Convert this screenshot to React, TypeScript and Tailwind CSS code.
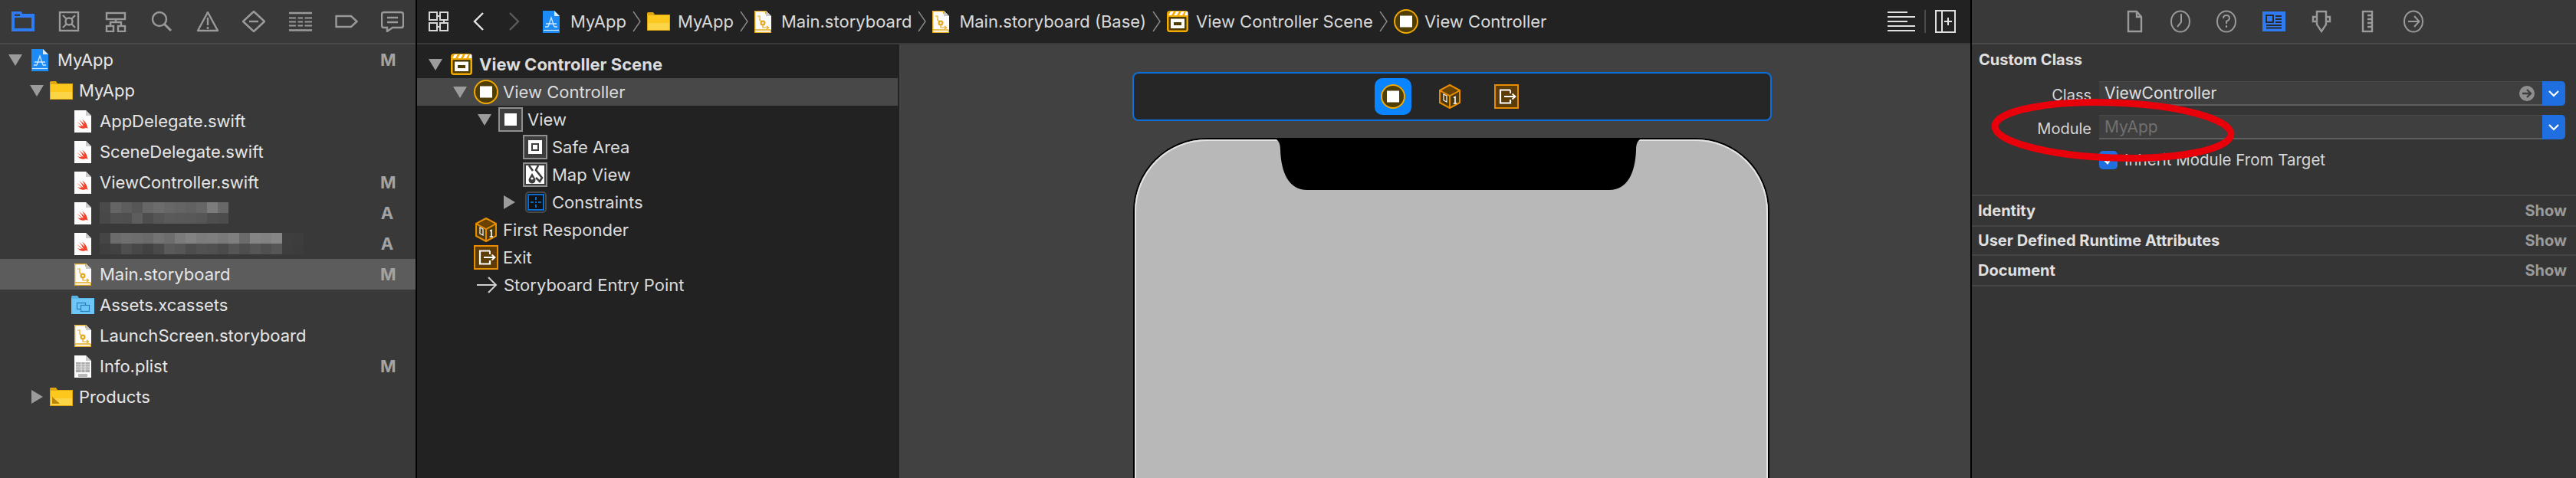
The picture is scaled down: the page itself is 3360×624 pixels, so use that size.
import type { ReactNode } from "react";

const rowOne = ["#4a4a4a", "#656565", "#5d5d5d", "#565656", "#666666", "#6c6c6c", "#676767", "#646464", "#616161", "#666666", "#7c7c7c", "#686868"];
const rowOneB = ["#484848", "#505050", "#4f4f4f", "#5d5d5d", "#4d4d4d", "#555555", "#5a5a5a", "#595959", "#585858", "#565656", "#4e4e4e", "#4c4c4c"];
const rowTwo = ["#454545", "#6b6b6b", "#6f6f6f", "#6d6d6d", "#6a6a6a", "#737373", "#6d6d6d", "#7b7b7b", "#828282", "#7c7c7c", "#7e7e7e", "#7a7a7a", "#7f7f7f", "#6b6b6b", "#858585", "#828282", "#868686", "#3e3e3e", "#3d3d3d"];
const rowTwoB = ["#3f3f3f", "#424242", "#4f4f4f", "#484848", "#424242", "#4a4a4a", "#5a5a5a", "#565656", "#4d4d4d", "#525252", "#505050", "#4b4b4b", "#555555", "#4e4e4e", "#565656", "#505050", "#565656", "#3e3e3e", "#3c3c3c"];

function Mosaic({ rows }: { rows: string[][] }) {
  return (
    <div className="flex flex-col">
      {rows.map((cells, r) => (
        <div key={r} className="flex">
          {cells.map((c, i) => (
            <div key={i} className="h-[14px] w-[14px]" style={{ backgroundColor: c }} />
          ))}
        </div>
      ))}
    </div>
  );
}

function TriDown({ className = "" }: { className?: string }) {
  return (
    <svg width="18" height="15" viewBox="0 0 18 15" className={`shrink-0 ${className}`}>
      <path d="M0 0H18L9 15Z" fill="#9b9b9b" />
    </svg>
  );
}

function TriRight({ className = "" }: { className?: string }) {
  return (
    <svg width="15" height="18" viewBox="0 0 15 18" className={`shrink-0 ${className}`}>
      <path d="M0 0V18L15 9Z" fill="#9b9b9b" />
    </svg>
  );
}

function ProjectIcon() {
  return (
    <svg width="22" height="29" viewBox="0 0 22 29" className="shrink-0">
      <path d="M0 0H15L22 7V29H0Z" fill="#1c8bf5" />
      <path d="M15 0L22 7H15Z" fill="#d9ecff" />
      <path d="M1 25.5H21" stroke="#d5ebff" strokeWidth="1.2" />
      <path d="M7 21L11 9L15 21M4 17H18M3 21H7M15 21H19" fill="none" stroke="#cfe7ff" strokeWidth="1.3" />
    </svg>
  );
}

function Folder({ products = false }: { products?: boolean }) {
  return (
    <svg width="30" height="24" viewBox="0 0 30 24" className="shrink-0">
      <path d="M0 1.5Q0 0 1.5 0H8L10 3H30V24H0Z" fill="#dfa70c" />
      <rect x="1" y="4" width="28" height="19" fill="#fcc81e" />
      <rect x="1" y="14" width="28" height="9" fill="#fbd545" />
      {products && <path d="M3 21V12L13 21Z" fill="#b98408" />}
    </svg>
  );
}

function AssetFolder() {
  return (
    <svg width="30" height="24" viewBox="0 0 30 24" className="shrink-0">
      <path d="M0 1.5Q0 0 1.5 0H8L10 3H30V24H0Z" fill="#57b4ea" />
      <rect x="0" y="4" width="30" height="20" fill="#6cc6f7" />
      <rect x="7.5" y="9.5" width="11" height="8" fill="none" stroke="#2e7fb8" strokeWidth="1.2" />
      <rect x="12.5" y="12.5" width="11" height="8" fill="#6cc6f7" stroke="#2e7fb8" strokeWidth="1.2" />
    </svg>
  );
}

function SwiftFile() {
  return (
    <svg width="22" height="29" viewBox="0 0 22 29" className="shrink-0">
      <path d="M0 0H15L22 7V29H0Z" fill="#fbfbfb" />
      <path d="M15 0L22 7H15Z" fill="#c9c9c9" />
      <path d="M4 15C7 18 10 20 12 21C10 17 8 14 6 12C9 14.5 12 17 13.5 18C12.5 15 11 13 10 11.5C13 13.5 16 16.5 16.5 20C17 21.5 17.3 23 18 24C16.5 22.8 15 23 13.5 23.5C10 24.5 6.5 23 4 20C6 21 8.5 21.2 9.5 20.5C8 19.5 5.5 17.5 4 15Z" fill="#f0442c" />
    </svg>
  );
}

function StoryboardFile({ small = false }: { small?: boolean }) {
  return (
    <svg width="22" height="29" viewBox="0 0 22 29" className="shrink-0">
      <path d="M0 0H15L22 7V29H0Z" fill="#fbfbfb" />
      <path d="M15 0L22 7H15Z" fill="#c9c9c9" />
      <path d="M.7.7H14.7V4M.7 .7V28.3H21.3V25M.7 25H21.3" fill="none" stroke="#e3aa1d" strokeWidth="1.3" />
      <path d="M4 7H7V12L9 14M11 19V22H18M16 20L18.5 22L16 24" fill="none" stroke="#e3aa1d" strokeWidth="1.2" />
      <circle cx="11" cy="16" r="3.5" fill="#e3aa1d" />
      <circle cx="11" cy="16" r="1.2" fill="#fbfbfb" />
      {small && <path d="M0 0" />}
    </svg>
  );
}

function PlistFile() {
  return (
    <svg width="22" height="29" viewBox="0 0 22 29" className="shrink-0">
      <path d="M0 0H15L22 7V29H0Z" fill="#fbfbfb" />
      <path d="M15 0L22 7H15Z" fill="#c9c9c9" />
      <rect x="2" y="9" width="18" height="13" fill="#a8a8a8" />
      <path d="M2 12H20M2 15H20M2 18H20M9 9V22M14 9V22" stroke="#ececec" strokeWidth="0.9" />
      <rect x="5" y="24" width="12" height="4" fill="#b8b8b8" />
    </svg>
  );
}

function SceneIcon() {
  return (
    <svg width="28" height="28" viewBox="0 0 28 28" className="shrink-0">
      <rect x="0" y="0" width="28" height="28" rx="4" fill="#f2a900" />
      <path d="M5 1H9L6 6H2ZM12 1H16L13 6H9ZM19 1H23L20 6H16ZM25 1H27V6H23Z" fill="#ffffff" />
      <rect x="2.5" y="8" width="23" height="17.5" rx="1" fill="#4f3c00" />
      <rect x="5" y="10.5" width="18" height="12.5" fill="#ffffff" />
      <rect x="9" y="15" width="10" height="4" fill="#4f3c00" />
    </svg>
  );
}

function VcIcon() {
  return (
    <svg width="32" height="32" viewBox="0 0 32 32" className="shrink-0">
      <circle cx="16" cy="16" r="15" fill="#4f3e05" stroke="#f2a900" strokeWidth="2" />
      <rect x="8" y="8.5" width="16" height="15" fill="#ffffff" />
    </svg>
  );
}

function ViewIcon() {
  return (
    <svg width="32" height="32" viewBox="0 0 32 32" className="shrink-0">
      <rect x="1" y="1" width="30" height="30" fill="#3d3d3d" stroke="#8f8f8f" strokeWidth="2" />
      <rect x="8" y="8" width="16" height="16" fill="#ffffff" />
    </svg>
  );
}

function SafeAreaIcon() {
  return (
    <svg width="32" height="32" viewBox="0 0 32 32" className="shrink-0">
      <rect x="1" y="1" width="30" height="30" fill="#3d3d3d" stroke="#8f8f8f" strokeWidth="2" />
      <rect x="7" y="7" width="18" height="18" fill="#ffffff" />
      <rect x="11" y="11" width="10" height="10" fill="#3d3d3d" />
      <rect x="13" y="13" width="6" height="6" fill="#ffffff" />
    </svg>
  );
}

function MapIcon() {
  return (
    <svg width="32" height="32" viewBox="0 0 32 32" className="shrink-0">
      <rect x="1" y="1" width="30" height="30" fill="#3d3d3d" stroke="#8f8f8f" strokeWidth="2" />
      <rect x="4" y="4" width="24" height="24" fill="#ffffff" />
      <path d="M8 4L13 11M20 4L17 10L25 20L22 25L17 20" fill="none" stroke="#3d3d3d" strokeWidth="2.6" />
      <path d="M12 14L16 21A4.5 4.5 0 1 1 8 21Z" fill="#3d3d3d" />
      <circle cx="12" cy="21" r="1.6" fill="#ffffff" />
    </svg>
  );
}

function ConstraintsIcon() {
  return (
    <svg width="28" height="28" viewBox="0 0 28 28" className="shrink-0">
      <rect x="1" y="1" width="26" height="26" rx="4" fill="#111111" stroke="#4a4a4a" strokeWidth="2" />
      <rect x="4" y="4" width="20" height="20" fill="none" stroke="#0a84ff" strokeWidth="1.6" />
      <path d="M14 7V11M14 13V15M14 17V21M7 14H11M17 14H21" stroke="#0a84ff" strokeWidth="1.6" />
    </svg>
  );
}

function CubeIcon({ size = 28 }: { size?: number }) {
  return (
    <svg width={size} height={32} viewBox="0 0 28 32" className="shrink-0">
      <path d="M14 1L27 8V24L14 31L1 24V8Z" fill="#4e3a10" stroke="#e88d00" strokeWidth="2" strokeLinejoin="round" />
      <path d="M1 8L14 15L27 8M14 15V31" fill="none" stroke="#e88d00" strokeWidth="2" />
      <path d="M14 3L24.5 8.5L14 14L3.5 8.5Z" fill="#6a4200" />
      <path d="M6 13L10 15V23L6 21Z" fill="none" stroke="#ffffff" strokeWidth="1.2" />
      <path d="M19 17.5L21 16.5V25M18.7 25H23" fill="none" stroke="#ffffff" strokeWidth="1.6" />
    </svg>
  );
}

function ExitIcon() {
  return (
    <svg width="32" height="32" viewBox="0 0 32 32" className="shrink-0">
      <rect x="1" y="1" width="30" height="30" fill="#5d3c08" stroke="#e88d00" strokeWidth="2" />
      <path d="M21 7.5H8V24.5H21V20" fill="none" stroke="#ffffff" strokeWidth="2.2" />
      <path d="M21 12V7.5M13 16H27M23.5 12.5L27.5 16L23.5 19.5" fill="none" stroke="#ffffff" strokeWidth="1.8" />
    </svg>
  );
}

function EntryArrow() {
  return (
    <svg width="28" height="24" viewBox="0 0 28 24" className="shrink-0">
      <path d="M1 12H26M16 2L26 12L16 22" fill="none" stroke="#cfcfcf" strokeWidth="2" />
    </svg>
  );
}

function Crumb() {
  return (
    <svg width="11" height="28" viewBox="0 0 11 28" className="mx-[8px] shrink-0">
      <path d="M1 1L10 14L1 27" fill="none" stroke="#8b8b8b" strokeWidth="1.4" />
    </svg>
  );
}

const navIcon = "shrink-0 text-[#9a9a9a]";

function NavBar() {
  return (
    <div className="flex h-14 items-center justify-between border-b-2 border-[#4a4a4a] box-content px-[15px]">
      <svg width="30" height="28" viewBox="0 0 30 28" className="shrink-0">
        <path d="M0 1H13L14 4H30V27H0Z" fill="#2f7bf3" />
        <rect x="4" y="9" width="22" height="14" fill="#3a3a3a" />
        <rect x="4" y="4.5" width="7" height="2.5" fill="#3a3a3a" />
      </svg>
      <svg width="30" height="28" viewBox="0 0 30 28" fill="none" stroke="currentColor" strokeWidth="2.4" className={navIcon}>
        <rect x="3" y="2" width="24" height="24" />
        <circle cx="15" cy="14" r="4.5" />
        <path d="M7 6L11.5 10.5M23 6L18.5 10.5M7 22L11.5 17.5M23 22L18.5 17.5" />
      </svg>
      <svg width="30" height="28" viewBox="0 0 30 28" fill="none" stroke="currentColor" strokeWidth="2.4" className={navIcon}>
        <rect x="3" y="3" width="24" height="8" />
        <path d="M15 11V15M8 20V15H22V20" />
        <rect x="3" y="20" width="9" height="7" />
        <rect x="18" y="20" width="9" height="7" />
      </svg>
      <svg width="30" height="28" viewBox="0 0 30 28" fill="none" stroke="currentColor" strokeWidth="2.4" className={navIcon}>
        <circle cx="12" cy="11" r="9" />
        <path d="M18.5 17.5L27 26" strokeWidth="3" />
      </svg>
      <svg width="30" height="28" viewBox="0 0 30 28" fill="none" stroke="currentColor" strokeWidth="2.4" className={navIcon}>
        <path d="M15 2L28 26H2Z" strokeLinejoin="round" />
        <path d="M15 9V19M15 21V24" />
      </svg>
      <svg width="30" height="28" viewBox="0 0 30 28" fill="none" stroke="currentColor" strokeWidth="2.4" className={navIcon}>
        <path d="M15 1L29 14L15 27L1 14Z" strokeLinejoin="round" />
        <path d="M9 14H21" />
      </svg>
      <svg width="30" height="28" viewBox="0 0 30 28" fill="none" stroke="currentColor" strokeWidth="2.4" className={navIcon}>
        <path d="M0 3H30M0 25.5H30" />
        <path d="M0 9.5H9M11.5 9.5H18M20.5 9.5H30M0 14.5H9M11.5 14.5H18M20.5 14.5H30M0 19.5H9M11.5 19.5H18M20.5 19.5H30" strokeWidth="2" />
      </svg>
      <svg width="30" height="28" viewBox="0 0 30 28" fill="none" stroke="currentColor" strokeWidth="2.4" className={navIcon}>
        <path d="M1.5 7H21L28.5 14L21 21H1.5Z" />
      </svg>
      <svg width="30" height="28" viewBox="0 0 30 28" fill="none" stroke="currentColor" strokeWidth="2.4" className={navIcon}>
        <path d="M4 2H26Q29 2 29 5V19Q29 22 26 22H15L8 27V22H4Q1 22 1 19V5Q1 2 4 2Z" />
        <path d="M8 9H22M8 15H22" />
      </svg>
    </div>
  );
}

function TreeRow({
  className,
  children,
  badge,
  selected = false,
}: {
  className: string;
  children: ReactNode;
  badge?: string;
  selected?: boolean;
}) {
  return (
    <div className={`flex h-10 items-center ${className} ${selected ? "bg-[#5c5c5c]" : ""}`}>
      {children}
      {badge && <span className="ml-auto w-[18px] text-center text-[22px] font-bold text-[#a3a3a3]">{badge}</span>}
    </div>
  );
}

function Navigator() {
  const file = "pl-[97px] pr-[28px] gap-[11px]";
  return (
    <aside className="w-[544px] shrink-0 border-r-2 border-black bg-[#393939] text-[#e6e6e6]">
      <NavBar />
      <div className="pt-0">
        <TreeRow className="pl-[11px] pr-[28px]" badge="M">
          <TriDown />
          <span className="ml-[12px]"><ProjectIcon /></span>
          <span className="ml-[12px]">MyApp</span>
        </TreeRow>
        <TreeRow className="pl-[39px] pr-[28px]">
          <TriDown />
          <span className="ml-[8px]"><Folder /></span>
          <span className="ml-[8px]">MyApp</span>
        </TreeRow>
        <TreeRow className={file}><SwiftFile /><span>AppDelegate.swift</span></TreeRow>
        <TreeRow className={file}><SwiftFile /><span>SceneDelegate.swift</span></TreeRow>
        <TreeRow className={file} badge="M"><SwiftFile /><span>ViewController.swift</span></TreeRow>
        <TreeRow className={file} badge="A"><SwiftFile /><Mosaic rows={[rowOne, rowOneB]} /></TreeRow>
        <TreeRow className={file} badge="A"><SwiftFile /><Mosaic rows={[rowTwo, rowTwoB]} /></TreeRow>
        <TreeRow className={file} badge="M" selected><StoryboardFile /><span>Main.storyboard</span></TreeRow>
        <TreeRow className="pl-[93px] pr-[28px] gap-[7px]"><AssetFolder /><span>Assets.xcassets</span></TreeRow>
        <TreeRow className={file}><StoryboardFile /><span>LaunchScreen.storyboard</span></TreeRow>
        <TreeRow className={file} badge="M"><PlistFile /><span>Info.plist</span></TreeRow>
        <TreeRow className="pl-[41px] pr-[28px]">
          <TriRight />
          <span className="ml-[9px]"><Folder products /></span>
          <span className="ml-[8px]">Products</span>
        </TreeRow>
      </div>
    </aside>
  );
}

function JumpBar() {
  return (
    <div className="box-content flex h-14 items-center border-b-2 border-[#3a3a3a] bg-[#222222] pl-[15px] pr-[19px] text-[#d9d9d9]">
      <svg width="26" height="26" viewBox="0 0 26 26" fill="none" stroke="#d8d8d8" strokeWidth="2" className="shrink-0">
        <rect x="1" y="1" width="10" height="10" />
        <rect x="15" y="1" width="10" height="10" />
        <rect x="1" y="15" width="10" height="10" />
        <rect x="15" y="15" width="10" height="10" />
        <path d="M11 6H15M20 11V15M11 20H15" />
      </svg>
      <svg width="14" height="24" viewBox="0 0 14 24" fill="none" stroke="#e6e6e6" strokeWidth="2.4" className="ml-[32px] shrink-0">
        <path d="M13 1L2 12L13 23" />
      </svg>
      <svg width="14" height="24" viewBox="0 0 14 24" fill="none" stroke="#5c5c5c" strokeWidth="2.4" className="ml-[33px] shrink-0">
        <path d="M1 1L12 12L1 23" />
      </svg>
      <span className="ml-[30px]"><ProjectIcon /></span>
      <span className="ml-[14px]">MyApp</span>
      <Crumb />
      <Folder />
      <span className="ml-[10px]">MyApp</span>
      <Crumb />
      <StoryboardFile />
      <span className="ml-[13px]">Main.storyboard</span>
      <Crumb />
      <StoryboardFile />
      <span className="ml-[13px]">Main.storyboard (Base)</span>
      <Crumb />
      <SceneIcon />
      <span className="ml-[10px]">View Controller Scene</span>
      <Crumb />
      <VcIcon />
      <span className="ml-[8px]">View Controller</span>
      <div className="ml-auto flex items-center">
        <svg width="36" height="28" viewBox="0 0 36 28" stroke="#e0e0e0" strokeWidth="2" className="shrink-0">
          <path d="M0 2H26M0 8H36M0 14H26M0 20H36M0 26H36" />
        </svg>
        <div className="mx-[12px] h-[30px] w-[2px] bg-[#4a4a4a]" />
        <svg width="27" height="30" viewBox="0 0 27 30" fill="none" stroke="#e0e0e0" strokeWidth="2" className="shrink-0">
          <rect x="1" y="1" width="25" height="28" />
          <path d="M9 1V29M12 15H22M17 10V20" />
        </svg>
      </div>
    </div>
  );
}

function OutlineRow({ className, children, selected = false }: { className: string; children: ReactNode; selected?: boolean }) {
  return <div className={`flex h-9 items-center ${className} ${selected ? "bg-[#484848]" : ""}`}>{children}</div>;
}

function Outline() {
  return (
    <div className="w-[631px] shrink-0 border-r-2 border-[#444444] bg-[#222222] pr-[2px] pt-[8px] text-[#dcdcdc]">
      <OutlineRow className="pl-[15px] gap-[11px]">
        <TriDown />
        <SceneIcon />
        <span className="ml-[-2px] font-bold">View Controller Scene</span>
      </OutlineRow>
      <OutlineRow className="pl-[47px] gap-[9px]" selected>
        <TriDown />
        <VcIcon />
        <span className="ml-[-3px]">View Controller</span>
      </OutlineRow>
      <OutlineRow className="pl-[79px] gap-[9px]">
        <TriDown />
        <ViewIcon />
        <span className="ml-[-3px]">View</span>
      </OutlineRow>
      <OutlineRow className="pl-[138px] gap-[6px]"><SafeAreaIcon /><span>Safe Area</span></OutlineRow>
      <OutlineRow className="pl-[138px] gap-[6px]"><MapIcon /><span>Map View</span></OutlineRow>
      <OutlineRow className="pl-[113px]">
        <TriRight />
        <span className="ml-[13px]"><ConstraintsIcon /></span>
        <span className="ml-[7px]">Constraints</span>
      </OutlineRow>
      <OutlineRow className="pl-[76px] gap-[8px]"><CubeIcon /><span>First Responder</span></OutlineRow>
      <OutlineRow className="pl-[74px] gap-[6px]"><ExitIcon /><span>Exit</span></OutlineRow>
      <OutlineRow className="pl-[77px] gap-[8px]"><EntryArrow /><span>Storyboard Entry Point</span></OutlineRow>
    </div>
  );
}

function Canvas() {
  return (
    <div className="min-w-0 flex-1 bg-[#414141] pl-[302px] pt-[36px]">
      <div className="flex h-16 w-[834px] items-center justify-center rounded-[8px] border-2 border-[#0b6fdc] bg-[#262626] pr-[14px]">
        <div className="flex h-12 w-12 items-center justify-center rounded-[10px] bg-[#0a84ff]"><VcIcon /></div>
        <span className="ml-[36px]"><CubeIcon /></span>
        <span className="ml-[44px]"><ExitIcon /></span>
      </div>
      <div className="relative mt-[22px] ml-px h-[460px] w-[830px] rounded-t-[96px] border-2 border-b-0 border-black bg-[#b8b8b8]">
        <div className="h-full w-full rounded-t-[94px] border-x-2 border-t-2 border-[#e4e4e4]" />
        <svg width="490" height="70" viewBox="0 0 490 70" className="absolute left-[177px] top-[-2px]">
          <path d="M0 0H490C480 0 477 6 477 16C476 45 466 68 442 68H48C24 68 14 45 13 16C13 6 10 0 0 0Z" fill="#000000" />
        </svg>
      </div>
    </div>
  );
}

function Inspector() {
  const toolIcon = "shrink-0 text-[#9a9a9a]";
  return (
    <aside className="relative w-[790px] shrink-0 border-l-2 border-black bg-[#353535] text-[#e0e0e0]">
      <div className="box-content flex h-14 items-center justify-center gap-[34px] border-b-2 border-[#4a4a4a] bg-[#393939] pr-[0px]">
        <svg width="26" height="30" viewBox="0 0 26 30" fill="none" stroke="currentColor" strokeWidth="2.4" className={toolIcon}>
          <path d="M5 2H16L22 9V28H5ZM16 2V9H22" />
        </svg>
        <svg width="26" height="30" viewBox="0 0 26 30" fill="none" stroke="currentColor" strokeWidth="2" className={toolIcon}>
          <ellipse cx="13" cy="15" rx="12" ry="13.5" />
          <path d="M14 5V16L9 22" />
        </svg>
        <svg width="26" height="30" viewBox="0 0 26 30" fill="none" stroke="currentColor" strokeWidth="2" className={toolIcon}>
          <ellipse cx="13" cy="15" rx="12" ry="13.5" />
          <path d="M9 11Q9 7 13 7Q17 7 17 11Q17 13 13 15V18M13 20V23" />
        </svg>
        <svg width="30" height="26" viewBox="0 0 30 26" className="shrink-0">
          <rect width="30" height="26" fill="#2f7bf3" />
          <rect x="5" y="5" width="9" height="9" fill="none" stroke="#2a2a2a" strokeWidth="2" />
          <path d="M17 6H25M17 10H25M17 14H25M5 18H25M5 21.5H25" stroke="#2a2a2a" strokeWidth="2" />
        </svg>
        <svg width="26" height="30" viewBox="0 0 26 30" fill="none" stroke="currentColor" strokeWidth="2.4" className={toolIcon}>
          <path d="M7 2H19V19L13 28L7 19ZM7 9H2V15H7M19 9H24V15H19" />
        </svg>
        <svg width="26" height="30" viewBox="0 0 26 30" fill="none" stroke="currentColor" strokeWidth="2.4" className={toolIcon}>
          <rect x="7" y="2" width="12" height="26" />
          <path d="M13 7H19M13 12H19M13 17H19M13 22H19" />
        </svg>
        <svg width="26" height="30" viewBox="0 0 26 30" fill="none" stroke="currentColor" strokeWidth="2" className={toolIcon}>
          <ellipse cx="13" cy="15" rx="12" ry="13.5" />
          <path d="M6 15H20M14 8L20.5 15L14 22" />
        </svg>
      </div>

      <div className="h-[198px] border-b-2 border-[#444444] pl-[9px] pr-[14px] pt-[8px]">
        <div className="text-[20px] font-bold leading-[24px]">Custom Class</div>
        <div className="mt-[16px] flex h-8 items-center">
          <span className="w-[157px] pr-[10px] pt-[4px] text-right text-[20px] text-[#d6d6d6]">Class</span>
          <div className="flex h-full flex-1 items-center border-b-2 border-t border-b-[#5f5f5f] border-t-[#4a4a4a] bg-[#3f3f3f] pl-[7px] pr-[10px]">
            <span className="text-[21px]">ViewController</span>
            <svg width="20" height="20" viewBox="0 0 20 20" className="ml-auto shrink-0">
              <circle cx="10" cy="10" r="10" fill="#8f8f8f" />
              <path d="M4 10H15M10 5L15 10L10 15" fill="none" stroke="#3f3f3f" strokeWidth="2.4" />
            </svg>
          </div>
          <Stepper />
        </div>
        <div className="mt-3 flex h-8 items-center">
          <span className="w-[157px] pr-[10px] pt-[4px] text-right text-[20px] text-[#d6d6d6]">Module</span>
          <div className="flex h-full flex-1 items-center border-b-2 border-t border-b-[#5f5f5f] border-t-[#4a4a4a] bg-[#3f3f3f] pl-[7px] pr-[10px]">
            <span className="text-[21px] text-[#707070]">MyApp</span>
          </div>
          <Stepper />
        </div>
        <div className="ml-[157px] mt-[15px] flex h-6 items-center gap-[9px]">
          <div className="flex h-6 w-6 items-center justify-center rounded-[5px] bg-[#1f6fe0]">
            <svg width="14" height="14" viewBox="0 0 14 14" fill="none" stroke="#ffffff" strokeWidth="2.4"><path d="M2 7L6 11L12 2" /></svg>
          </div>
          <span className="text-[20.5px] text-[#d6d6d6]">Inherit Module From Target</span>
        </div>
      </div>

      <Section label="Identity" className="h-[40px]" />
      <Section label="User Defined Runtime Attributes" className="h-[38px]" />
      <Section label="Document" className="h-[40px]" />

      <svg width="340" height="100" viewBox="0 0 340 100" className="absolute left-[14px] top-[120px]">
        <ellipse cx="170" cy="50" rx="154" ry="36" transform="rotate(2 170 50)" fill="none" stroke="#e8000b" strokeWidth="9" />
      </svg>
    </aside>
  );
}

function Stepper() {
  return (
    <div className="flex h-full w-[30px] shrink-0 items-center justify-center rounded-r-[5px] bg-[#1f6fe0]">
      <svg width="14" height="10" viewBox="0 0 14 10" fill="none" stroke="#ffffff" strokeWidth="2.2"><path d="M1 2L7 8L13 2" /></svg>
    </div>
  );
}

function Section({ label, className }: { label: string; className: string }) {
  return (
    <div className={`flex items-center justify-between border-b-2 border-[#444444] pl-[8px] pr-[12px] text-[20px] font-bold ${className}`}>
      <span>{label}</span>
      <span className="text-[#9a9a9a]">Show</span>
    </div>
  );
}

export default function App() {
  return (
    <div className="flex h-[624px] w-[3360px] overflow-hidden bg-[#222222] font-['Inter',sans-serif] text-[22px] leading-none antialiased">
      <Navigator />
      <div className="flex min-w-0 flex-1 flex-col">
        <JumpBar />
        <div className="flex min-h-0 flex-1">
          <Outline />
          <Canvas />
        </div>
      </div>
      <Inspector />
    </div>
  );
}
